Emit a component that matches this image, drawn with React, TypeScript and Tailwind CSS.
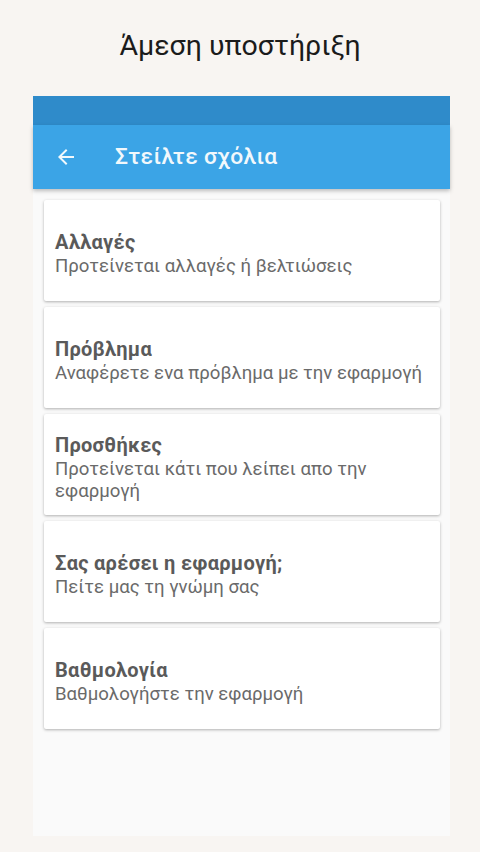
import React from 'react';

const items = [
  { title: 'Αλλαγές', text: 'Προτείνεται αλλαγές ή βελτιώσεις' },
  { title: 'Πρόβλημα', text: 'Αναφέρετε ενα πρόβλημα με την εφαρμογή' },
  { title: 'Προσθήκες', text: 'Προτείνεται κάτι που λείπει απο την εφαρμογή' },
  { title: 'Σας αρέσει η εφαρμογή;', text: 'Πείτε μας τη γνώμη σας' },
  { title: 'Βαθμολογία', text: 'Βαθμολογήστε την εφαρμογή' },
];

const ArrowBack = () => (
  <svg width="24" height="24" viewBox="0 0 24 24" fill="#f1f8fc">
    <path d="M20 11H7.83l5.59-5.59L12 4l-8 8 8 8 1.41-1.41L7.83 13H20v-2z" />
  </svg>
);

export default function App() {
  return (
    <div className="min-h-[852px] w-[480px] bg-[#f8f5f2] flex flex-col" style={{ fontFamily: 'Roboto, "Noto Sans", sans-serif' }}>
      <h1 className="h-[96px] flex items-center justify-center pb-[4px] text-[28.5px] text-[#1b1b1b]">Άμεση υποστήριξη</h1>

      <div className="ml-[33px] w-[417px] h-[740px] bg-[#fafafa] flex flex-col">
        <div className="h-[29px] bg-[#2f8bca]" />
        <div className="h-[64px] bg-[#3ba4e6] flex items-center gap-[37px] pl-[21px] shadow-[0_2px_4px_rgba(0,0,0,0.25)] relative">
          <ArrowBack />
          <span className="text-[22.8px] font-medium text-[#f1f8fc] tracking-[0.4px]">Στείλτε σχόλια</span>
        </div>

        <div className="flex flex-col gap-[6px] pt-[11px] pl-[11px] pr-[10px]">
          {items.map((it) => (
            <div
              key={it.title}
              className="h-[101px] bg-white rounded-[2px] shadow-[0_1px_3px_rgba(0,0,0,0.3)] flex flex-col justify-center pl-[11px] pr-[8px] pt-[5px]"
            >
              <div className="text-[20px] font-bold text-[#5a5a5a] leading-[26px] tracking-[0.3px]">{it.title}</div>
              <div className="text-[18.6px] text-[#6a6a6a] leading-[22px]">{it.text}</div>
            </div>
          ))}
        </div>
      </div>
    </div>
  );
}
